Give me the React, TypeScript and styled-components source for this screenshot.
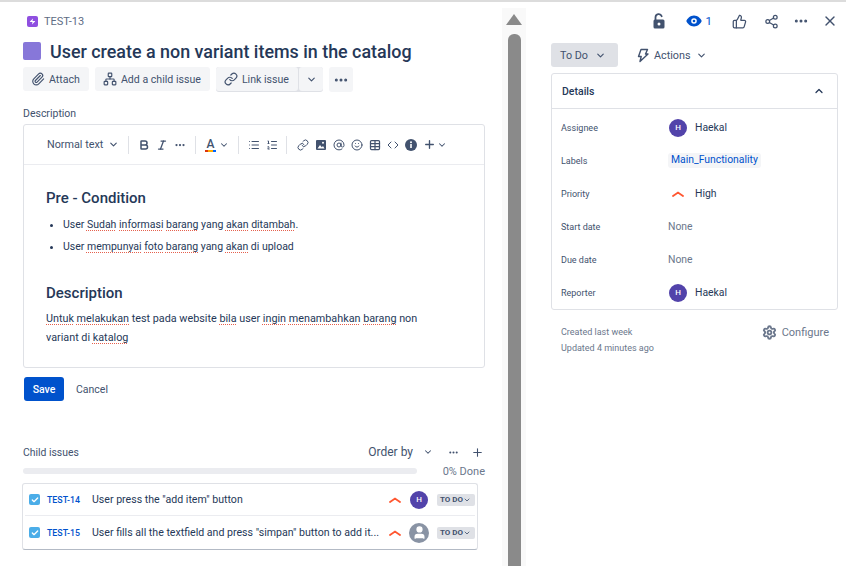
import React from 'react';
import styled, { createGlobalStyle } from 'styled-components';
import { Paperclip, Link, ChevronDown, ChevronUp, Ellipsis, Plus, X, ThumbsUp, Share2, Bold, Italic, List, ListOrdered, AtSign, Smile, Table, Code, Check, Settings, Network, Zap, User } from 'lucide-react';

const GlobalStyle = createGlobalStyle`
  html, body {
    margin: 0;
    padding: 0;
    background: #fff;
    overflow: hidden;
  }
  body {
    font-family: Roboto, "Noto Sans", sans-serif;
    color: #172b4d;
  }
  * { box-sizing: border-box; }
`;

const Page = styled.div`
  width: 846px;
  height: 566px;
  display: flex;
  border-top: 2px solid #dcdcdc;
  overflow: hidden;
`;

const Main = styled.div`
  width: 502px;
  padding: 12px 17px 0 23px;
  flex-shrink: 0;
`;

const IssueKey = styled.div`
  display: flex;
  align-items: center;
  gap: 6px;
  height: 14px;
  margin-left: 4px;
  font-size: 11px;
  color: #5e6c84;
`;

const KeyIcon = styled.span`
  width: 11px;
  height: 11px;
  border-radius: 2px;
  background: #8f4fe0;
  color: #fff;
  display: flex;
  align-items: center;
  justify-content: center;
`;

const TitleRow = styled.div`
  display: flex;
  align-items: center;
  gap: 9px;
  margin-top: 10px;
  height: 26px;
`;

const Swatch = styled.span`
  width: 18px;
  height: 18px;
  border-radius: 2px;
  background: #8777d9;
  flex-shrink: 0;
`;

const Title = styled.h1`
  margin: 0;
  font-size: 17.9px;
  font-weight: 500;
  color: #253858;
  white-space: nowrap;
`;

const Actions = styled.div`
  display: flex;
  gap: 6px;
  margin-top: 3px;
`;

const ActionButton = styled.button`
  height: 24px;
  display: flex;
  align-items: center;
  gap: 4px;
  padding: 0 9px 0 8px;
  border: none;
  border-radius: 3px;
  background: #f4f5f7;
  color: #42526e;
  font-family: inherit;
  font-size: 10.6px;
  white-space: nowrap;
`;

const SplitGroup = styled.div`
  display: flex;
  gap: 1px;
  background: #dfe1e6;
  border-radius: 3px;
`;

const SplitEnd = styled(ActionButton)`
  width: 24px;
  padding: 0;
  justify-content: center;
`;

const MoreButton = styled(ActionButton)`
  width: 24px;
  height: 25px;
  padding: 0;
  justify-content: center;
`;

const FieldLabel = styled.div`
  margin-top: 14px;
  height: 16px;
  font-size: 10.5px;
  line-height: 16px;
  color: #42526e;
`;

const Editor = styled.div`
  margin: 2px 0 0;
  width: 462px;
  height: 244px;
  border: 1px solid #dfe1e6;
  border-radius: 3px;
`;

const Toolbar = styled.div`
  height: 40px;
  padding-left: 14px;
  display: flex;
  align-items: center;
  border-bottom: 1px solid #ebecf0;
  color: #42526e;
`;

const ToolGroup = styled.div<{ $gap?: number; $width: number; $last?: boolean }>`
  display: flex;
  align-items: center;
  gap: ${p => p.$gap ?? 6}px;
  width: ${p => p.$width}px;
  padding-left: ${p => (p.$last ? 10 : 9)}px;
  height: 18px;
  border-right: ${p => (p.$last ? 'none' : '1px solid #dfe1e6')};
  flex-shrink: 0;
`;

const StyleSelect = styled.span`
  font-size: 10.8px;
  display: flex;
  align-items: center;
  gap: 5px;
`;

const ColorA = styled.span`
  width: 11px;
  font-size: 12px;
  font-weight: 500;
  line-height: 12px;
  text-align: center;
  border-bottom: 2px solid;
  border-image: linear-gradient(90deg, #de350b 33%, #ffab00 33%, #ffab00 66%, #0065ff 66%) 1;
`;

const PlusChevron = styled.span`
  display: flex;
  align-items: center;
  margin-left: -5px;
`;

const Body = styled.div`
  padding: 22px 22px 0;
`;

const Heading = styled.h2`
  margin: 0;
  font-size: 15px;
  line-height: 22px;
  font-weight: 500;
  color: #253858;
`;

const Bullets = styled.ul`
  margin: 5px 0 0;
  padding: 0 0 0 17px;
  font-size: 10.5px;
  line-height: 22px;
  color: #253858;
`;

const Paragraph = styled.p`
  margin: 5px 0 0;
  width: 402px;
  font-size: 10.8px;
  line-height: 19px;
  color: #253858;
`;

const Typo = styled.span`
  text-decoration: underline dotted #e5604d 1px;
  text-underline-offset: 2px;
  text-decoration-skip-ink: none;
`;

const SpacedHeading = styled(Heading)`
  margin-top: 24px;
`;

const FormButtons = styled.div`
  display: flex;
  align-items: center;
  gap: 12px;
  margin: 9px 0 0 1px;
`;

const SaveButton = styled.button`
  width: 40px;
  height: 24px;
  border: none;
  border-radius: 3px;
  background: #0052cc;
  color: #fff;
  font-family: inherit;
  font-size: 10.5px;
  font-weight: 500;
  padding: 0;
`;

const CancelButton = styled.span`
  font-size: 10.5px;
  color: #42526e;
`;

const ChildHeader = styled.div`
  display: flex;
  align-items: center;
  margin-top: 42px;
  height: 18px;
  padding-right: 1px;
  font-size: 10.4px;
  color: #42526e;
`;

const ChildTitle = styled.span`
  flex: 1;
`;

const OrderBy = styled.span`
  font-size: 12px;
  margin-right: 10px;
`;

const HeaderIcons = styled.span`
  display: flex;
  align-items: center;
  gap: 12px;
  margin-left: 15px;
`;

const ProgressRow = styled.div`
  display: flex;
  align-items: center;
  justify-content: space-between;
  margin-top: 2px;
  height: 16px;
`;

const ProgressTrack = styled.div`
  width: 394px;
  height: 6px;
  border-radius: 3px;
  background: #ebecf0;
`;

const ProgressLabel = styled.span`
  font-size: 11px;
  color: #6b778c;
`;

const ChildList = styled.div`
  width: 456px;
  margin: 4px 0 0 -1px;
  height: 67px;
  padding: 0 2px;
  border: 1px solid #dfe1e6;
  border-bottom-color: #b3bac5;
  border-radius: 3px;
`;

const ChildRow = styled.div<{ $last?: boolean }>`
  height: ${p => (p.$last ? 33 : 32)}px;
  display: flex;
  align-items: center;
  padding-left: 4px;
  font-size: 10.6px;
  border-bottom: ${p => (p.$last ? 'none' : '1px solid #ebecf0')};
`;

const TaskIcon = styled.span`
  width: 11px;
  height: 11px;
  border-radius: 2px;
  background: #4bade8;
  color: #fff;
  display: flex;
  align-items: center;
  justify-content: center;
  flex-shrink: 0;
`;

const ChildKey = styled.span`
  width: 45px;
  margin-left: 7px;
  font-size: 8.8px;
  font-weight: 500;
  color: #0052cc;
  flex-shrink: 0;
`;

const ChildSummary = styled.span`
  width: 292px;
  margin-right: 5px;
  color: #253858;
  white-space: nowrap;
  overflow: hidden;
  text-overflow: ellipsis;
  flex-shrink: 0;
`;

const Avatar = styled.span<{ $size?: number }>`
  width: ${p => p.$size ?? 18}px;
  height: ${p => p.$size ?? 18}px;
  border-radius: 50%;
  background: #5243aa;
  color: #fff;
  font-size: 8px;
  font-weight: 500;
  display: flex;
  align-items: center;
  justify-content: center;
  flex-shrink: 0;
`;

const DetailAvatar = styled(Avatar)`
  margin-left: 1px;
`;

const GhostAvatar = styled(Avatar)`
  background: #8993a4;
  overflow: hidden;
  margin-right: -1px;
`;

const StatusLozenge = styled.span`
  margin-left: 9px;
  width: 41px;
  height: 12px;
  padding-left: 3px;
  border-radius: 2px;
  background: #dfe1e6;
  color: #42526e;
  font-size: 8px;
  font-weight: 700;
  display: flex;
  align-items: center;
  white-space: nowrap;
`;

const PriorityMark = styled.svg<{ $gap?: number; $left?: number }>`
  flex-shrink: 0;
  margin-left: ${p => p.$left ?? 0}px;
  margin-right: ${p => p.$gap ?? 0}px;
`;

const ScrollColumn = styled.div`
  width: 24px;
  margin-top: 6px;
  background: #f9f9f9;
  flex-shrink: 0;
  display: flex;
  flex-direction: column;
  align-items: center;
  padding-top: 6px;
`;

const ScrollArrow = styled.span`
  width: 0;
  height: 0;
  border-left: 8px solid transparent;
  border-right: 8px solid transparent;
  border-bottom: 11px solid #8a8a8a;
`;

const ScrollThumb = styled.div`
  flex: 1;
  width: 13px;
  margin-top: 9px;
  border-radius: 6px 6px 0 0;
  background: #8a8a8a;
`;

const Side = styled.div`
  width: 287px;
  margin-left: 25px;
  flex-shrink: 0;
`;

const TopIcons = styled.div`
  display: flex;
  align-items: center;
  justify-content: flex-end;
  height: 22px;
  margin-top: 8px;
  color: #42526e;
`;

const TopIcon = styled.span<{ $gap?: number; $blue?: boolean }>`
  display: flex;
  align-items: center;
  gap: 4px;
  margin-left: ${p => p.$gap ?? 14}px;
  color: ${p => (p.$blue ? '#0052cc' : '#42526e')};
  font-size: 11.5px;
`;

const StatusRow = styled.div`
  display: flex;
  align-items: center;
  margin-top: 11px;
  gap: 18px;
`;

const StatusButton = styled.button`
  width: 67px;
  height: 24px;
  border: none;
  border-radius: 3px;
  background: #dfe1e6;
  color: #42526e;
  font-family: inherit;
  font-size: 10.8px;
  display: flex;
  align-items: center;
  gap: 7px;
  padding: 0 0 0 9px;
`;

const ActionsLabel = styled.span`
  display: flex;
  align-items: center;
  gap: 5px;
  font-size: 10.8px;
  color: #42526e;
`;

const DetailsCard = styled.div`
  margin-top: 6px;
  border: 1px solid #dfe1e6;
  border-radius: 3px;
`;

const DetailsHeader = styled.div`
  height: 35px;
  padding: 0 12px 0 10px;
  display: flex;
  align-items: center;
  justify-content: space-between;
  border-bottom: 1px solid #dfe1e6;
  font-size: 10.5px;
  font-weight: 500;
  color: #253858;
`;

const DetailRows = styled.div`
  padding: 2px 10px 0 9px;
`;

const DetailRow = styled.div`
  display: grid;
  grid-template-columns: 107px 1fr;
  align-items: center;
  height: 33px;
`;

const DetailLabel = styled.span`
  font-size: 9px;
  color: #42526e;
`;

const DetailValue = styled.span<{ $muted?: boolean }>`
  display: flex;
  align-items: center;
  gap: 8px;
  font-size: 10.4px;
  color: ${p => (p.$muted ? '#6b778c' : '#253858')};
`;

const LabelChip = styled.span`
  margin-left: 0;
  padding: 0 3px;
  height: 15px;
  line-height: 14px;
  border-radius: 3px;
  background: #f4f5f7;
  color: #0052cc;
`;

const Footer = styled.div`
  display: flex;
  justify-content: space-between;
  padding: 14px 9px 0 10px;
`;

const Timestamps = styled.div`
  font-size: 9px;
  line-height: 16px;
  color: #6b778c;
`;

const ConfigureLink = styled.span`
  display: flex;
  align-items: center;
  gap: 5px;
  height: 16px;
  font-size: 11px;
  color: #6b778c;
`;

const chevron = (size = 12) => <ChevronDown size={size} strokeWidth={2.5} />;

const High = ({ gap, left }: { gap?: number; left?: number }) => (
  <PriorityMark $gap={gap} $left={left} width="12" height="6" viewBox="0 0 12 6" fill="none">
    <path d="M1 5 L6 1.5 L11 5" stroke="#ff5630" strokeWidth="1.8" strokeLinecap="round" />
  </PriorityMark>
);

const LockIcon = () => (
  <svg width="14" height="16" viewBox="0 0 14 16">
    <path d="M3.5 7V4.2a3.2 3.2 0 0 1 6.2-1" fill="none" stroke="currentColor" strokeWidth="1.8" strokeLinecap="round" />
    <rect x="1.5" y="6.5" width="11" height="9" rx="1.5" fill="currentColor" />
    <circle cx="7" cy="11" r="1.5" fill="#fff" />
  </svg>
);

const EyeIcon = () => (
  <svg width="16" height="12" viewBox="0 0 16 12">
    <path d="M8 0.5C4.2 0.5 1.3 3.5 0.3 6c1 2.5 3.9 5.5 7.7 5.5S14.7 8.5 15.7 6C14.7 3.5 11.8 0.5 8 0.5z" fill="currentColor" />
    <circle cx="8" cy="6" r="2.8" fill="#fff" />
    <circle cx="8" cy="6" r="1.3" fill="currentColor" />
  </svg>
);

const InfoIcon = () => (
  <svg width="12" height="12" viewBox="0 0 12 12">
    <circle cx="6" cy="6" r="6" fill="currentColor" />
    <rect x="5.2" y="5" width="1.6" height="4" fill="#fff" />
    <circle cx="6" cy="3.3" r="1" fill="#fff" />
  </svg>
);

const PictureIcon = () => (
  <svg width="12" height="12" viewBox="0 0 12 12">
    <rect x="1" y="1" width="10" height="10" rx="1" fill="currentColor" />
    <path d="M2.500 9.500 5 6l1.800 2.200L8 7l1.500 2.500z" fill="#fff" />
    <circle cx="8" cy="3.800" r="1" fill="#fff" />
  </svg>
);

const PenIcon = () => (
  <svg width="13" height="15" viewBox="0 0 13 15" fill="none" stroke="currentColor" strokeWidth="1.4" strokeLinejoin="round">
    <path d="M5 1.500h6.500L9.500 6H12L4 13.500 5.200 8.500H2.500z" />
  </svg>
);

export default function App() {
  return (
    <>
      <GlobalStyle />
      <Page>
        <Main>
          <IssueKey>
            <KeyIcon><Zap size={7} fill="#fff" strokeWidth={0} /></KeyIcon>
            TEST-13
          </IssueKey>
          <TitleRow>
            <Swatch />
            <Title>User create a non variant items in the catalog</Title>
          </TitleRow>
          <Actions>
            <ActionButton><Paperclip size={14} />Attach</ActionButton>
            <ActionButton><Network size={14} />Add a child issue</ActionButton>
            <SplitGroup>
              <ActionButton><Link size={14} />Link issue</ActionButton>
              <SplitEnd>{chevron(11)}</SplitEnd>
            </SplitGroup>
            <MoreButton><Ellipsis size={16} strokeWidth={2.5} /></MoreButton>
          </Actions>
          <FieldLabel>Description</FieldLabel>
          <Editor>
            <Toolbar>
              <ToolGroup $width={91}>
                <StyleSelect>Normal text {chevron(11)}</StyleSelect>
              </ToolGroup>
              <ToolGroup $width={67}>
                <Bold size={12} strokeWidth={3} />
                <Italic size={12} strokeWidth={2.5} />
                <Ellipsis size={12} strokeWidth={2.5} />
              </ToolGroup>
              <ToolGroup $width={43} $gap={3}>
                <ColorA>A</ColorA>
                {chevron(10)}
              </ToolGroup>
              <ToolGroup $width={48}>
                <List size={12} />
                <ListOrdered size={12} />
              </ToolGroup>
              <ToolGroup $width={170} $last>
                <Link size={12} />
                <PictureIcon />
                <AtSign size={12} />
                <Smile size={12} />
                <Table size={12} strokeWidth={2.5} />
                <Code size={12} />
                <InfoIcon />
                <Plus size={13} strokeWidth={2.5} />
                <PlusChevron>{chevron(10)}</PlusChevron>
              </ToolGroup>
            </Toolbar>
            <Body>
              <Heading>Pre - Condition</Heading>
              <Bullets>
                <li>User <Typo>Sudah</Typo> <Typo>informasi</Typo> <Typo>barang</Typo> yang <Typo>akan</Typo> <Typo>ditambah</Typo>.</li>
                <li>User <Typo>mempunyai</Typo> <Typo>foto</Typo> <Typo>barang</Typo> yang <Typo>akan</Typo> di upload</li>
              </Bullets>
              <SpacedHeading>Description</SpacedHeading>
              <Paragraph>
                <Typo>Untuk</Typo> <Typo>melakukan</Typo> test pada website <Typo>bila</Typo> user <Typo>ingin</Typo> <Typo>menambahkan</Typo> <Typo>barang</Typo> non variant di <Typo>katalog</Typo>
              </Paragraph>
            </Body>
          </Editor>
          <FormButtons>
            <SaveButton>Save</SaveButton>
            <CancelButton>Cancel</CancelButton>
          </FormButtons>
          <ChildHeader>
            <ChildTitle>Child issues</ChildTitle>
            <OrderBy>Order by</OrderBy>
            {chevron(10)}
            <HeaderIcons>
              <Ellipsis size={11} strokeWidth={2.5} />
              <Plus size={13} />
            </HeaderIcons>
          </ChildHeader>
          <ProgressRow>
            <ProgressTrack />
            <ProgressLabel>0% Done</ProgressLabel>
          </ProgressRow>
          <ChildList>
            <ChildRow>
              <TaskIcon><Check size={8} strokeWidth={4} /></TaskIcon>
              <ChildKey>TEST-14</ChildKey>
              <ChildSummary>User press the "add item" button</ChildSummary>
              <High gap={9} />
              <Avatar>H</Avatar>
              <StatusLozenge>TO DO{chevron(8)}</StatusLozenge>
            </ChildRow>
            <ChildRow $last>
              <TaskIcon><Check size={8} strokeWidth={4} /></TaskIcon>
              <ChildKey>TEST-15</ChildKey>
              <ChildSummary>User fills all the textfield and press "simpan" button to add it...</ChildSummary>
              <High gap={8} />
              <GhostAvatar $size={20}><User size={15} fill="#fff" stroke="#fff" /></GhostAvatar>
              <StatusLozenge>TO DO{chevron(8)}</StatusLozenge>
            </ChildRow>
          </ChildList>
        </Main>
        <ScrollColumn>
          <ScrollArrow />
          <ScrollThumb />
        </ScrollColumn>
        <Side>
          <TopIcons>
            <TopIcon><LockIcon /></TopIcon>
            <TopIcon $blue $gap={20}><EyeIcon />1</TopIcon>
            <TopIcon $gap={20}><ThumbsUp size={15} /></TopIcon>
            <TopIcon $gap={17}><Share2 size={15} /></TopIcon>
            <TopIcon $gap={14}><Ellipsis size={16} strokeWidth={2.5} /></TopIcon>
            <TopIcon $gap={13}><X size={16} /></TopIcon>
          </TopIcons>
          <StatusRow>
            <StatusButton>To Do {chevron(11)}</StatusButton>
            <ActionsLabel>
              <PenIcon />
              Actions
              {chevron(11)}
            </ActionsLabel>
          </StatusRow>
          <DetailsCard>
            <DetailsHeader>Details<ChevronUp size={12} strokeWidth={2.5} /></DetailsHeader>
            <DetailRows>
              <DetailRow>
                <DetailLabel>Assignee</DetailLabel>
                <DetailValue><DetailAvatar>H</DetailAvatar>Haekal</DetailValue>
              </DetailRow>
              <DetailRow>
                <DetailLabel>Labels</DetailLabel>
                <DetailValue><LabelChip>Main_Functionality</LabelChip></DetailValue>
              </DetailRow>
              <DetailRow>
                <DetailLabel>Priority</DetailLabel>
                <DetailValue><High left={4} gap={3} />High</DetailValue>
              </DetailRow>
              <DetailRow>
                <DetailLabel>Start date</DetailLabel>
                <DetailValue $muted>None</DetailValue>
              </DetailRow>
              <DetailRow>
                <DetailLabel>Due date</DetailLabel>
                <DetailValue $muted>None</DetailValue>
              </DetailRow>
              <DetailRow>
                <DetailLabel>Reporter</DetailLabel>
                <DetailValue><DetailAvatar>H</DetailAvatar>Haekal</DetailValue>
              </DetailRow>
            </DetailRows>
          </DetailsCard>
          <Footer>
            <Timestamps>
              Created last week<br />
              Updated 4 minutes ago
            </Timestamps>
            <ConfigureLink><Settings size={15} strokeWidth={3} />Configure</ConfigureLink>
          </Footer>
        </Side>
      </Page>
    </>
  );
}
